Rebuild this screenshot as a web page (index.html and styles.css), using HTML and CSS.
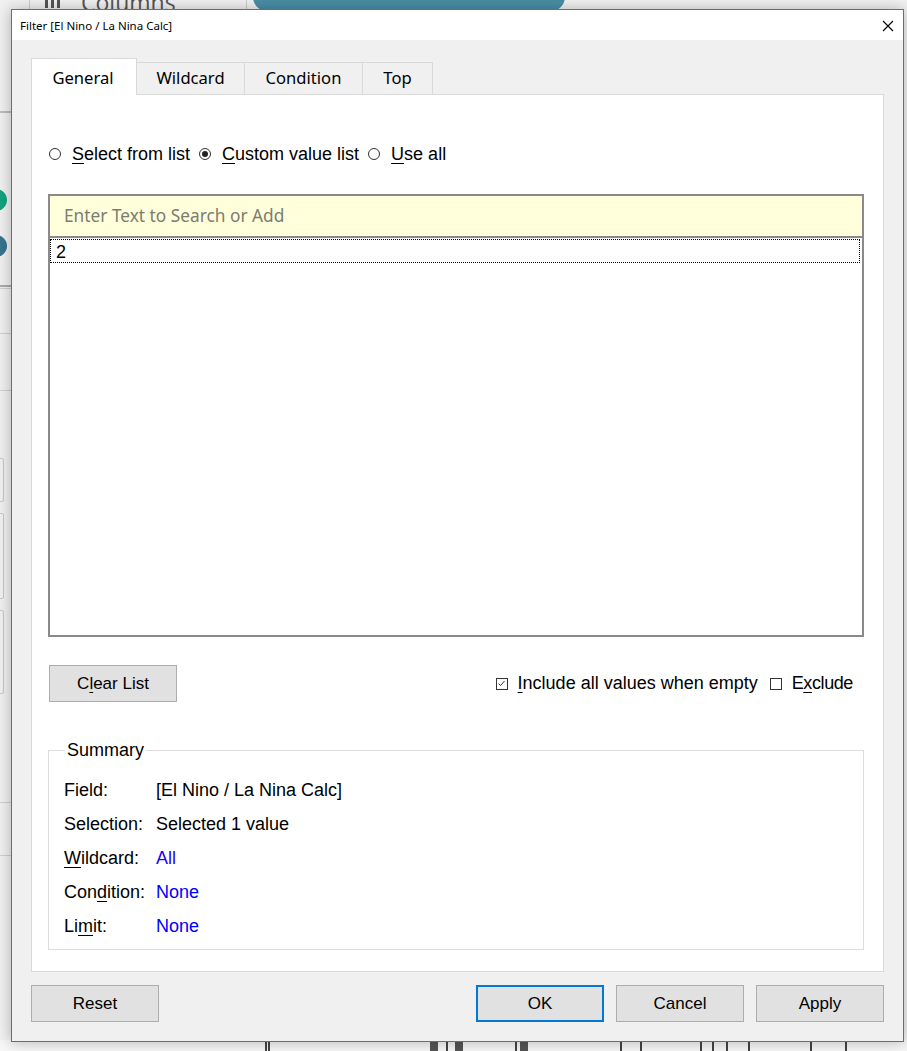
FILE: index.html
```html
<!DOCTYPE html>
<html>
<head>
<meta charset="utf-8">
<link rel="stylesheet" href="styles.css">
<title>Filter</title>
</head>
<body>
<div class="desk">
  <div class="bg-top">
    <div class="bg-colicon"><span></span><span></span><span></span></div>
    <div class="bg-columns">Columns</div>
    <div class="bg-sep bg-sep1"></div>
    <div class="bg-sep bg-sep2"></div>
    <div class="bg-pill">Date</div>
  </div>
  <div class="bg-left">
    <div class="bl-line l1"></div>
    <div class="bl-dot dot-green"></div>
    <div class="bl-dot dot-blue"></div>
    <div class="bl-line l2"></div>
    <div class="bl-line l3"></div>
    <div class="bl-line l4"></div>
    <div class="bl-box b1"></div>
    <div class="bl-box b2"></div>
    <div class="bl-box b3"></div>
    <div class="bl-line l5"></div>
    <div class="bl-line l6"></div>
    <div class="bl-line l7"></div>
  </div>
  <div class="bg-bottom">
    <span style="left:265px"></span><span style="left:268px"></span>
    <span class="wide" style="left:430px"></span>
    <span style="left:446px"></span>
    <span class="wide" style="left:455px"></span>
    <span style="left:515px"></span>
    <span class="wide" style="left:520px"></span>
    <span style="left:620px"></span><span style="left:640px"></span>
    <span style="left:700px"></span><span style="left:712px"></span>
    <span style="left:726px"></span>
    <span style="left:748px"></span>
    <span style="left:810px"></span><span style="left:845px"></span>
  </div>

  <div class="window">
    <div class="titlebar">
      <span class="title">Filter [El Nino / La Nina Calc]</span>
      <svg class="close" width="12" height="12" viewBox="0 0 12 12"><path d="M1 1 L11 11 M11 1 L1 11" stroke="#000" stroke-width="1.1" fill="none"/></svg>
    </div>
    <div class="client">
      <div class="tabs">
        <div class="tab active t1">General</div>
        <div class="tab t2">Wildcard</div>
        <div class="tab t3">Condition</div>
        <div class="tab t4">Top</div>
      </div>
      <div class="panel">
        <div class="radios">
          <span class="radio"></span><span class="rlabel"><u>S</u>elect from list</span>
          <span class="radio on"></span><span class="rlabel"><u>C</u>ustom value list</span>
          <span class="radio"></span><span class="rlabel"><u>U</u>se all</span>
        </div>
        <div class="listbox">
          <div class="search">Enter Text to Search or Add</div>
          <div class="items">
            <div class="item">2</div>
          </div>
        </div>
        <div class="actions">
          <div class="btn clear">C<u>l</u>ear List</div>
          <div class="checks">
            <span class="cb">
              <svg width="9" height="9" viewBox="0 0 9 9"><path d="M1.5 4.5 L3.5 6.5 L7.5 2" stroke="#333" stroke-width="1" fill="none"/></svg>
            </span>
            <span class="clabel"><u>I</u>nclude all values when empty</span>
            <span class="cb"></span>
            <span class="clabel excl">E<u>x</u>clude</span>
          </div>
        </div>
        <fieldset class="summary">
          <legend>Summary</legend>
          <div class="row"><span class="k">Field:</span><span class="v">[El Nino / La Nina Calc]</span></div>
          <div class="row"><span class="k">Selection:</span><span class="v">Selected 1 value</span></div>
          <div class="row"><span class="k"><u>W</u>ildcard:</span><span class="v link-all">All</span></div>
          <div class="row"><span class="k">Con<u>d</u>ition:</span><span class="v link">None</span></div>
          <div class="row"><span class="k">Li<u>m</u>it:</span><span class="v link">None</span></div>
        </fieldset>
      </div>
      <div class="buttons">
        <div class="btn">Reset</div>
        <div class="spacer"></div>
        <div class="btn ok">OK</div>
        <div class="btn">Cancel</div>
        <div class="btn">Apply</div>
      </div>
    </div>
  </div>
</div>
</body>
</html>
```
FILE: styles.css
```css
html, body {
  margin: 0;
  padding: 0;
}
body {
  background: #f3f3f3;
  font-family: "Liberation Sans", Arial, sans-serif;
}
.desk {
  position: relative;
  width: 907px;
  height: 1051px;
  overflow: hidden;
  background: #f4f4f4;
}

/* background application (behind the dialog) */
.bg-top {
  position: absolute;
  left: 0; top: 0;
  width: 907px;
  height: 12px;
  background: #f3f3f3;
}
.bg-colicon {
  position: absolute;
  left: 45px; top: -6px;
  display: flex;
  gap: 3px;
}
.bg-colicon span {
  width: 3px; height: 14px;
  background: #555;
}
.bg-columns {
  position: absolute;
  left: 81px; top: -14px;
  font-family: "Open Sans", sans-serif;
  font-size: 23px;
  color: #555;
}
.bg-sep {
  position: absolute;
  top: 0;
  width: 1px;
  height: 12px;
  background: #cfcfcf;
}
.bg-sep1 { left: 29px; }
.bg-sep2 { left: 246px; }
.bg-pill {
  position: absolute;
  left: 253px; top: -20px;
  width: 312px; height: 31px;
  border-radius: 14px;
  background: #4a8fa6;
  color: #fff;
  font-family: "Open Sans", sans-serif;
  font-size: 20px;
  line-height: 24px;
  padding-left: 22px;
  box-sizing: border-box;
}
.bg-left {
  position: absolute;
  left: 0; top: 0;
  width: 14px;
  height: 1051px;
  background: #f1f1f1;
}
.bl-line {
  position: absolute;
  left: 0;
  width: 14px;
  height: 1px;
  background: #d0d0d0;
}
.l1 { top: 111px; background: #bbb; height: 2px; }
.l2 { top: 285px; background: #aaa; height: 2px; }
.l3 { top: 288px; }
.l4 { top: 333px; }
.l5 { top: 390px; }
.l6 { top: 802px; }
.l7 { top: 855px; }
.bl-dot {
  position: absolute;
  width: 22px; height: 22px;
  border-radius: 50%;
  left: -15px;
}
.dot-green { top: 189px; background: #14a37e; }
.dot-blue { top: 235px; background: #35748f; }
.bl-box {
  position: absolute;
  left: -6px;
  width: 8px;
  border: 1px solid #c8c8c8;
  border-radius: 2px;
}
.b1 { top: 458px; height: 42px; }
.b2 { top: 513px; height: 84px; }
.b3 { top: 610px; height: 82px; }
.bg-bottom {
  position: absolute;
  left: 0; top: 1040px;
  width: 907px;
  height: 11px;
  background: #f7f7f7;
}
.bg-bottom span {
  position: absolute;
  top: 2px;
  width: 2px;
  height: 9px;
  background: #444;
}
.bg-bottom span.wide {
  width: 8px;
  background: #555;
}

/* dialog window */
.window {
  position: absolute;
  left: 11px; top: 9px;
  width: 893px;
  height: 1033px;
  box-sizing: border-box;
  border: 1px solid #1883d7;
  background: #f0f0f0;
  box-shadow: 0 0 14px rgba(0, 0, 0, 0.28);
  display: flex;
  flex-direction: column;
}
.titlebar {
  height: 30px;
  background: #fff;
  display: flex;
  align-items: center;
  justify-content: space-between;
  padding: 0 8px 0 8px;
  flex: none;
}
.title {
  font-family: "Noto Sans", sans-serif;
  font-size: 11.5px;
  color: #000;
  padding-top: 1px;
}
.close {
  display: block;
  margin-right: 1px;
  margin-top: 1px;
}
.client {
  flex: 1;
  padding: 18px 19px 0 19px;
  display: flex;
  flex-direction: column;
}
.tabs {
  display: flex;
  align-items: flex-end;
  height: 36px;
  position: relative;
  z-index: 1;
}
.tab {
  box-sizing: border-box;
  height: 32px;
  border: 1px solid #d9d9d9;
  border-left: none;
  border-bottom: none;
  background: #f0f0f0;
  font-family: "Noto Sans", sans-serif;
  font-size: 16.6px;
  color: #000;
  text-align: center;
  line-height: 30px;
}
.tab.active {
  height: 37px;
  margin-bottom: -1px;
  border-left: 1px solid #d9d9d9;
  background: #fff;
  line-height: 38px;
  padding-right: 2px;
}
.t1 { width: 106px; }
.t2 { width: 108px; }
.t3 { width: 118px; }
.t4 { width: 70px; }

.panel {
  box-sizing: border-box;
  height: 878px;
  background: #fff;
  border: 1px solid #d9d9d9;
  display: flex;
  flex-direction: column;
  padding: 0 19px 0 16px;
  font-size: 18px;
  color: #000;
}
.radios {
  display: flex;
  align-items: center;
  height: 20px;
  margin-top: 49px;
  margin-left: 1px;
}
.radio {
  box-sizing: border-box;
  width: 12px; height: 12px;
  border: 1px solid #333;
  border-radius: 50%;
  background: #fff;
  margin-right: 11px;
  position: relative;
}
.radio.on::after {
  content: "";
  position: absolute;
  left: 2px; top: 2px;
  width: 6px; height: 6px;
  border-radius: 50%;
  background: #222;
}
.rlabel {
  margin-right: 9px;
}
u {
  text-decoration: underline;
  text-decoration-thickness: 1px;
  text-underline-offset: 3px;
}
.listbox {
  box-sizing: border-box;
  margin-top: 30px;
  width: 816px;
  height: 443px;
  border: 2px solid #8a8a8a;
  display: flex;
  flex-direction: column;
}
.search {
  height: 40px;
  background: #ffffdc;
  border-bottom: 2px solid #8a8a8a;
  font-family: "Noto Sans", sans-serif;
  font-size: 17.3px;
  color: #7c7c6e;
  line-height: 40px;
  padding-left: 14px;
}
.items {
  flex: 1;
  background: #fff;
  padding: 1px 2px 0 0;
}
.item {
  height: 22px;
  border: 1px dotted #000;
  line-height: 24px;
  padding-left: 5px;
  color: #000;
}
.actions {
  display: flex;
  align-items: center;
  justify-content: space-between;
  margin-top: 28px;
  width: 816px;
}
.btn {
  box-sizing: border-box;
  width: 128px;
  height: 37px;
  background: #e1e1e1;
  border: 1px solid #adadad;
  display: flex;
  align-items: center;
  justify-content: center;
  font-size: 17px;
  color: #000;
}
.btn.clear { margin-left: 1px; }
.checks {
  display: flex;
  align-items: center;
  margin-right: 11px;
}
.cb {
  box-sizing: border-box;
  width: 12px; height: 12px;
  border: 1px solid #333;
  background: #fff;
  display: flex;
  align-items: center;
  justify-content: center;
  margin-right: 10px;
}
.cb svg { display: block; }
.clabel { margin-right: 12px; }
.clabel.excl { margin-right: 0; letter-spacing: -0.4px; }

.summary {
  margin: 38px 0 0 0;
  padding: 13px 0 0 15px;
  width: 816px;
  height: 210px;
  box-sizing: border-box;
  border: 1px solid #dcdcdc;
  min-width: 0;
}
.summary legend {
  padding: 0 2px;
  margin-left: 1px;
  line-height: 20px;
  font-size: 18px;
}
.row {
  display: flex;
  height: 34px;
  line-height: 34px;
}
.k { width: 92px; }
.link { color: #0000ff; }
.link-all { color: #2400ff; }

.buttons {
  display: flex;
  margin-top: 13px;
  gap: 12px;
}
.buttons .spacer { flex: 1; }
.btn.ok {
  border: 2px solid #0078d7;
}
```
